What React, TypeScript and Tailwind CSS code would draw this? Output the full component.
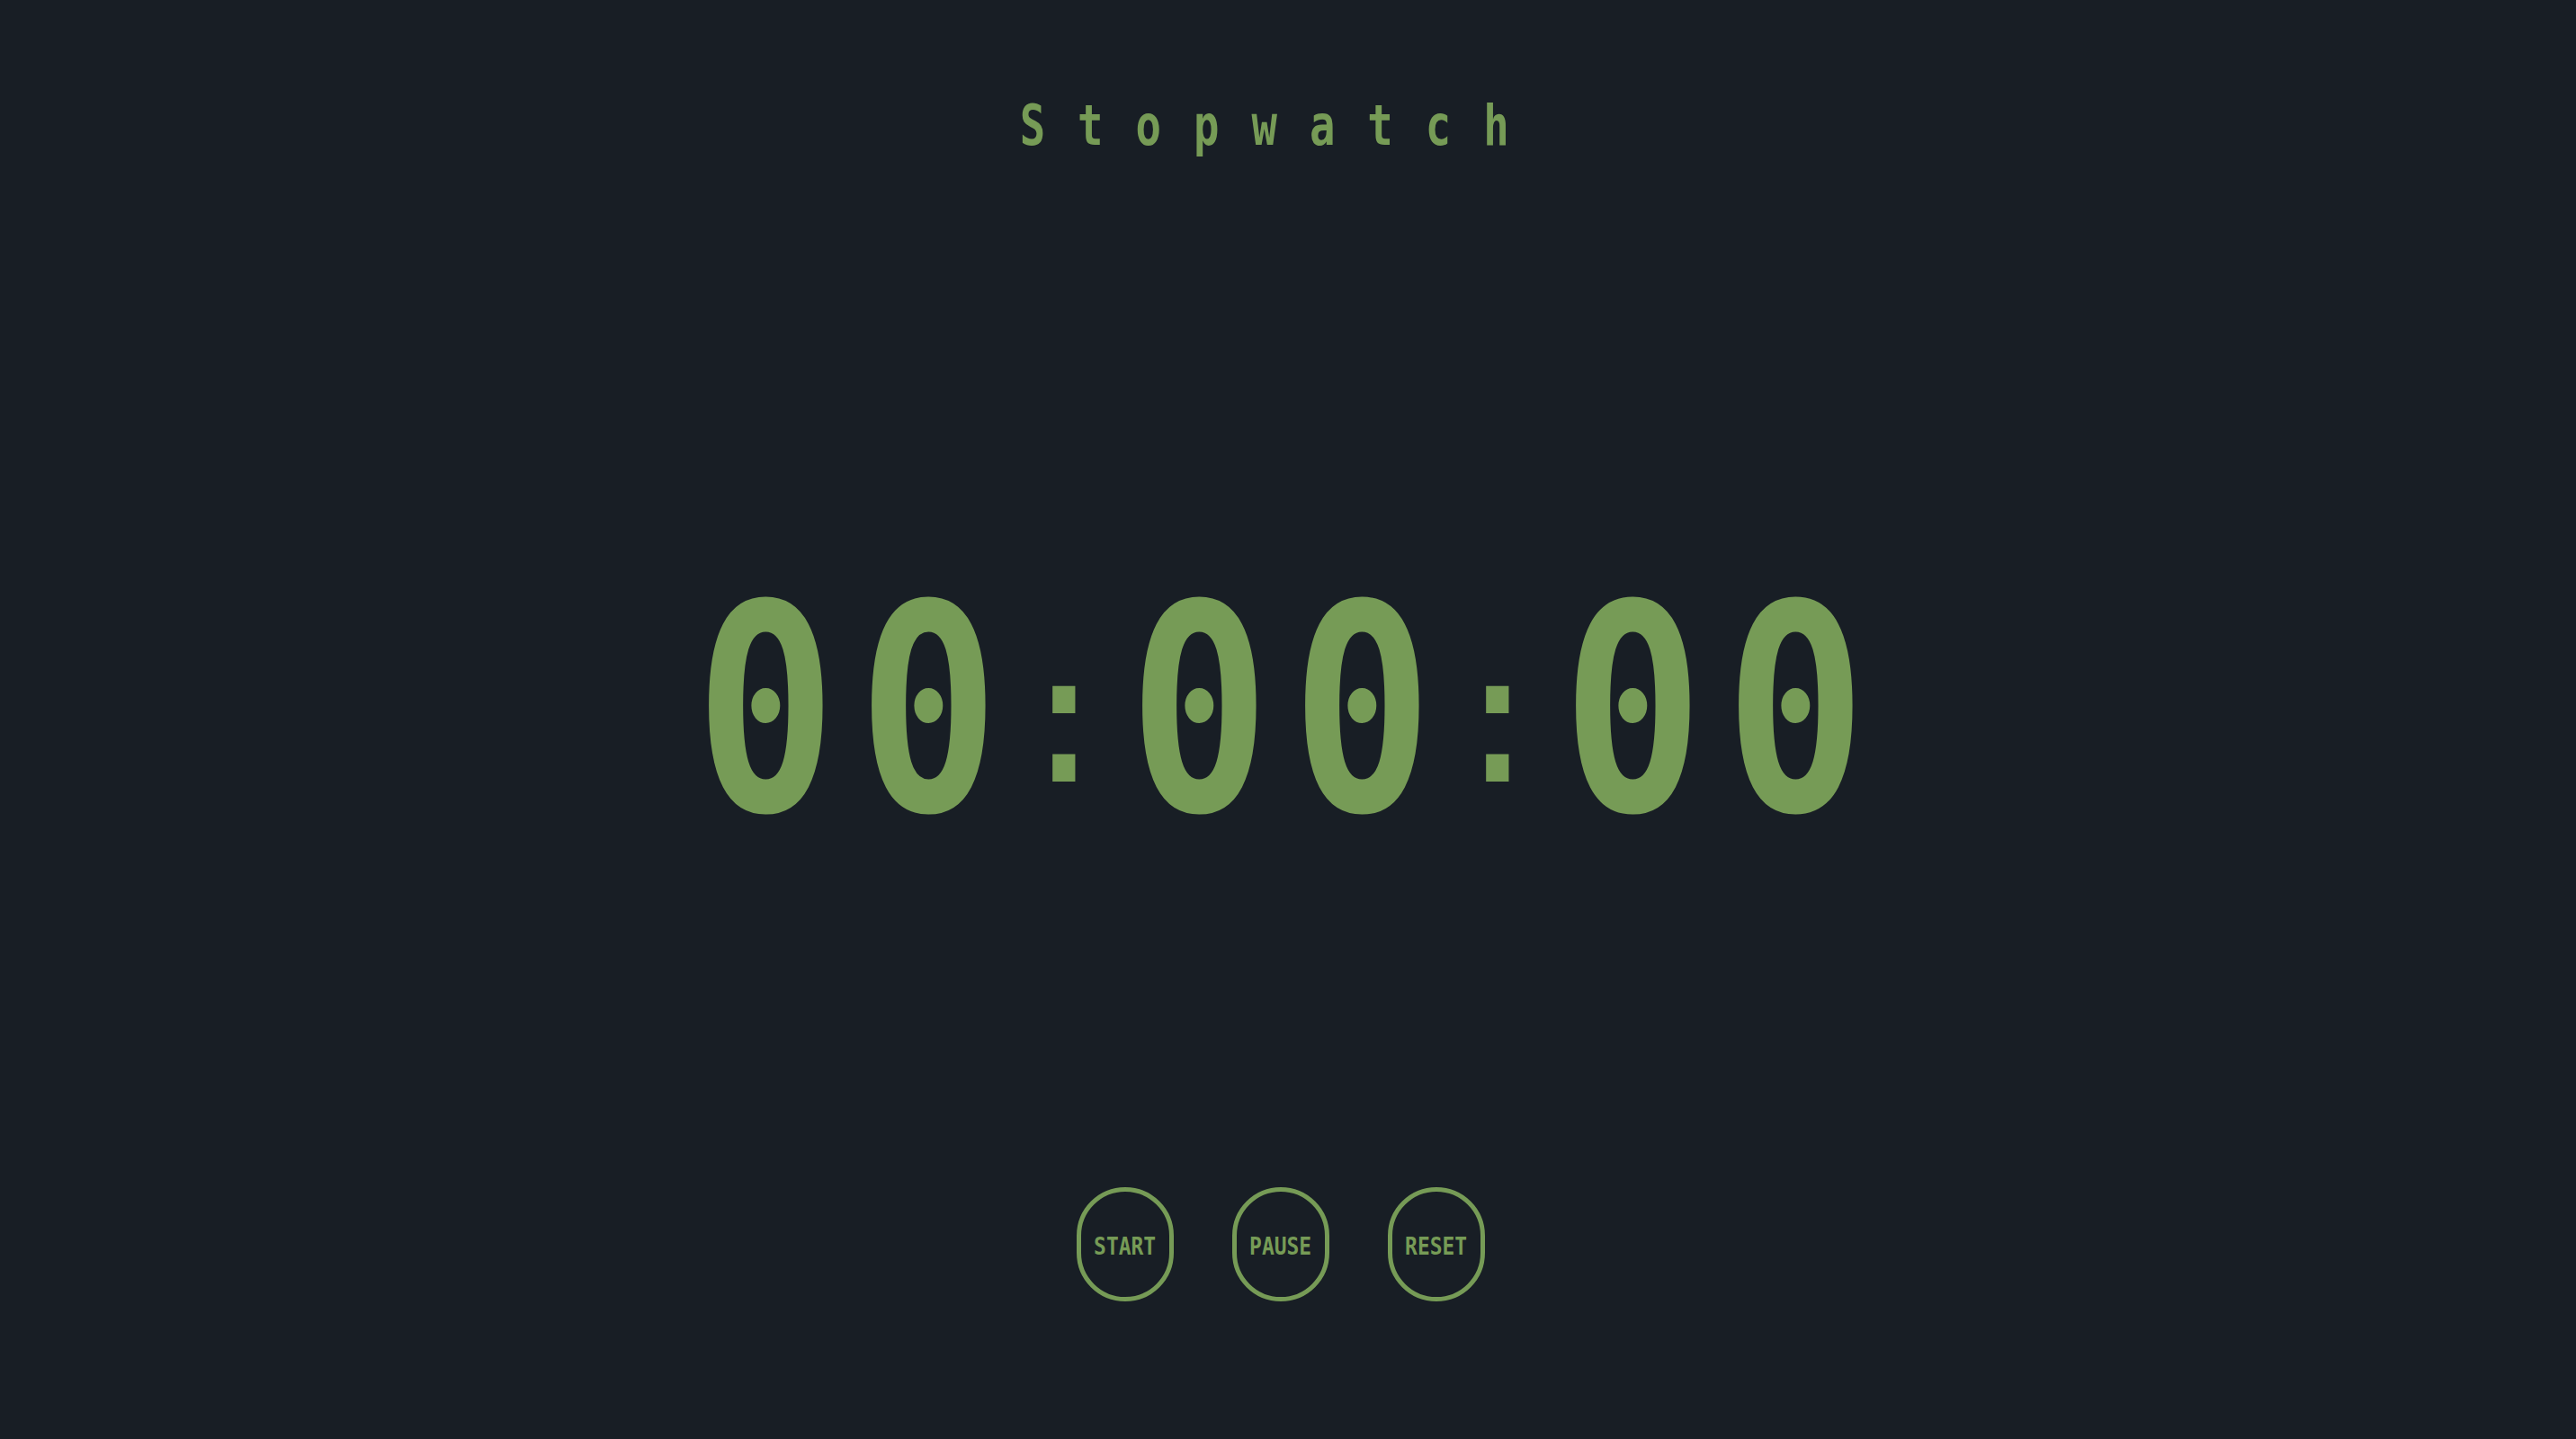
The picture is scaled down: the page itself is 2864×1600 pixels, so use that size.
import React from "react";

function Digit({ ch }: { ch: string }) {
  return (
    <span className="w-[130px] h-[320px] flex justify-center overflow-visible">
      <span className="block font-['DejaVu_Sans_Mono',monospace] text-[320px] leading-none font-bold text-[#769b56] scale-x-[0.82]">
        {ch}
      </span>
    </span>
  );
}

function Colon() {
  return (
    <span className="w-[23px] h-[320px] mx-[74px] flex justify-center overflow-visible">
      <span className="block font-['DejaVu_Sans_Mono',monospace] text-[205px] leading-none text-[#769b56] mt-[66px]">
        :
      </span>
    </span>
  );
}

function Btn({ label }: { label: string }) {
  return (
    <button className="w-[108px] h-[127px] rounded-[54px] border-[5px] border-[#769b56] flex items-center justify-center text-[#769b56]">
      <span className="font-['DejaVu_Sans_Mono',monospace] font-bold text-[27px] leading-none scale-x-[0.85] mt-[3px]">
        {label}
      </span>
    </button>
  );
}

export default function App() {
  return (
    <div className="w-full h-[1600px] bg-[#181e25] flex flex-col items-center pr-4 overflow-hidden">
      <h1 className="pt-[108px] font-['DejaVu_Sans_Mono',monospace] font-bold text-[63px] leading-none text-[#769b56] tracking-[48px] scale-x-[0.75]">
        Stopwatch
      </h1>
      <div className="mt-[459px] flex items-start">
        <Digit ch="0" />
        <span className="w-[51px]" />
        <Digit ch="0" />
        <Colon />
        <Digit ch="0" />
        <span className="w-[51px]" />
        <Digit ch="0" />
        <Colon />
        <Digit ch="0" />
        <span className="w-[51px]" />
        <Digit ch="0" />
      </div>
      <div className="mt-[370px] flex gap-[65px]">
        <Btn label="START" />
        <Btn label="PAUSE" />
        <Btn label="RESET" />
      </div>
    </div>
  );
}
